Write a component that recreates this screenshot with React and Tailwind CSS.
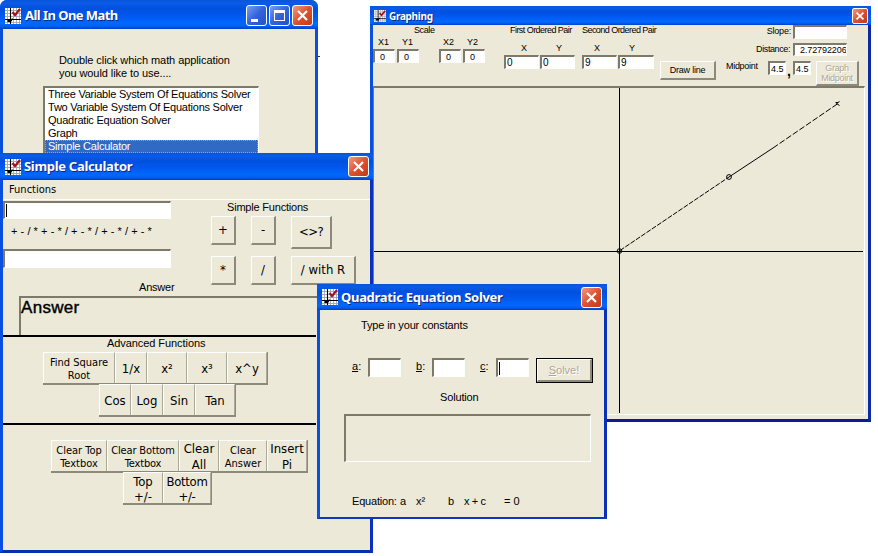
import React from "react";

const SUNKEN =
  "border-t-2 border-l-2 border-b border-r border-t-[#7d7a6c] border-l-[#7d7a6c] border-b-white border-r-white";

function AppIcon({ className }) {
  return (
    <svg viewBox="0 0 16 16" className={className}>
      <rect width="16" height="16" fill="#fff" />
      <path
        d="M2.5 0V16M8.5 0V16M11.5 0V16M14.5 0V16M0 2.5H16M0 5.5H16M0 8.5H16M0 14.5H16"
        stroke="#a3a3ae"
        strokeWidth="0.9"
      />
      <path d="M5.5 0V16M0 11.5H16" stroke="#000" strokeWidth="1.1" />
      <path d="M2 13l2-2 2 1 1-2 1 1-2 3H3z" fill="#000" />
      <path d="M7.5 4L10 7L15 1" fill="none" stroke="#a8101c" strokeWidth="2.2" />
    </svg>
  );
}

function CloseButton({ small }) {
  return (
    <span
      className={
        "flex shrink-0 items-center justify-center border border-white bg-gradient-to-br from-[#ee9a80] via-[#dc5130] to-[#c03a18] " +
        (small ? "h-4 w-4 rounded-[2px]" : "h-[21px] w-[21px] rounded-[3px]")
      }
    >
      <svg viewBox="0 0 13 13" className={small ? "h-[10px] w-[10px]" : "h-[13px] w-[13px]"}>
        <path d="M2 2L11 11M11 2L2 11" stroke="#fff" strokeWidth="2.2" />
      </svg>
    </span>
  );
}

function BlueButton({ children }) {
  return (
    <span className="flex h-[21px] w-[21px] shrink-0 rounded-[3px] border border-white bg-gradient-to-br from-[#7c9df0] via-[#3263dc] to-[#2450cc]">
      {children}
    </span>
  );
}

const TITLE =
  "flex shrink-0 items-center bg-[linear-gradient(180deg,#0a55d8_0%,#0b5be8_12%,#0050e0_30%,#0058ee_55%,#0068ff_80%,#0060f4_90%,#0040c0_100%)]";
const TITLE_TEXT =
  "whitespace-nowrap font-['Noto_Sans','Open_Sans',sans-serif] font-bold text-white [text-shadow:1px_1px_0_#0a2a80]";

function Raised({ className, children }) {
  return (
    <span
      className={
        "flex shrink-0 items-center justify-center whitespace-nowrap border-t border-l border-b-2 border-r-2 border-t-white border-l-white border-b-[#8d8a7b] border-r-[#8d8a7b] bg-[#ece9d8] text-center " +
        className
      }
    >
      {children}
    </span>
  );
}

function Segment({ className, children }) {
  return (
    <span
      className={
        "flex h-full shrink-0 items-center justify-center whitespace-nowrap border-t border-l border-r border-t-white border-l-white border-r-[#aca899] pt-px text-center font-['DejaVu_Sans_Condensed','DejaVu_Sans',sans-serif] [font-stretch:condensed] " +
        className
      }
    >
      {children}
    </span>
  );
}

function Strip({ className, children }) {
  return (
    <div className={"flex h-[33px] w-fit border-r border-b-2 border-[#8d8a7b] " + className}>{children}</div>
  );
}

function Field({ className, children }) {
  return (
    <span className={"flex shrink-0 items-center overflow-hidden whitespace-nowrap bg-white " + SUNKEN + " " + className}>
      {children}
    </span>
  );
}

function MainWindow() {
  return (
    <section className="absolute top-0 left-0 flex h-[170px] w-[318px] flex-col overflow-hidden rounded-t-[7px] bg-[#0a4fd8]">
      <header className={TITLE + " h-[29px] pt-[2px] pr-[5px] pl-[5px]"}>
        <AppIcon className="h-4 w-4" />
        <span className={TITLE_TEXT + " ml-[4px] flex-1 text-[13px] tracking-[-0.55px]"}>All In One Math</span>
        <div className="flex gap-[2px]">
          <BlueButton>
            <i className="mt-[13px] ml-[4px] h-[3px] w-[7px] bg-white" />
          </BlueButton>
          <BlueButton>
            <i className="m-[4px] h-[11px] w-[11px] border border-t-[3px] border-white" />
          </BlueButton>
          <CloseButton />
        </div>
      </header>
      <div className="mx-[3px] flex-1 bg-[#ece9d8] pt-[25px]">
        <p className="ml-[56px] text-[11px] leading-[13px] tracking-[-0.08px] whitespace-nowrap">
          Double click which math application
          <br />
          you would like to use....
        </p>
        <ul className="mt-[6px] ml-[40px] h-[80px] w-[216px] border-t-2 border-l-2 border-r border-t-[#7d7a6c] border-l-[#7d7a6c] border-r-white bg-white text-[11px] leading-[13px] tracking-[-0.23px] whitespace-nowrap">
          <li className="pl-[3px]">Three Variable System Of Equations Solver</li>
          <li className="pl-[3px]">Two Variable System Of Equations Solver</li>
          <li className="pl-[3px]">Quadratic Equation Solver</li>
          <li className="pl-[3px]">Graph</li>
          <li className="bg-[#316ac5] pl-[3px] text-white outline-1 -outline-offset-1 outline-dotted outline-[#c99b4a]">
            Simple Calculator
          </li>
        </ul>
      </div>
    </section>
  );
}

function GraphWindow() {
  return (
    <section className="absolute top-[6px] left-[370px] flex h-[416px] w-[501px] flex-col border-r-[3px] border-b-[3px] border-l-[3px] border-r-[#0a2aa8] border-b-[#0a1c90] border-l-[#0a50e0] bg-[#ece9d8] text-[9px] leading-[10px] whitespace-nowrap">
      <header className={TITLE + " -mr-[3px] -ml-[3px] h-[19px] pr-[3px] pl-[4px]"}>
        <AppIcon className="h-[12px] w-[12px]" />
        <span className={TITLE_TEXT + " ml-[3px] flex-1 text-[10px] tracking-[-0.3px]"}>Graphing</span>
        <CloseButton small />
      </header>
      <div className="flex h-[61px] shrink-0">
        <div className="w-[131px]">
          <p className="pl-[41px] leading-[11px] tracking-[-0.4px]">Scale</p>
          <div className="mt-[1px] flex">
            <span className="w-[24px] pl-[5px]">X1</span>
            <span className="w-[41px] pl-[5px]">Y1</span>
            <span className="w-[25px] pl-[5px]">X2</span>
            <span className="pl-[4px]">Y2</span>
          </div>
          <div className="mt-[2px] flex">
            <Field className="h-[14px] w-[22px] pl-[5px]">0</Field>
            <Field className="ml-[2px] h-[14px] w-[22px] pl-[5px]">0</Field>
            <Field className="ml-[20px] h-[14px] w-[22px] pl-[5px]">0</Field>
            <Field className="ml-[2px] h-[14px] w-[22px] pl-[5px]">0</Field>
          </div>
        </div>
        <div className="w-[78px]">
          <p className="pl-[6px] leading-[11px] tracking-[-0.55px]">First Ordered Pair</p>
          <div className="mt-[7px] flex">
            <span className="w-[35px] pl-[17px]">X</span>
            <span className="pl-[17px]">Y</span>
          </div>
          <div className="mt-[2px] flex gap-[1px]">
            <Field className="h-[14px] w-[35px] pl-[1px] text-[10px]">0</Field>
            <Field className="h-[14px] w-[35px] pl-[1px] text-[10px]">0</Field>
          </div>
        </div>
        <div className="w-[78px]">
          <p className="leading-[11px] tracking-[-0.55px]">Second Ordered Pair</p>
          <div className="mt-[7px] flex">
            <span className="w-[35px] pl-[12px]">X</span>
            <span className="pl-[12px]">Y</span>
          </div>
          <div className="mt-[2px] flex gap-[1px]">
            <Field className="h-[14px] w-[35px] pl-[1px] text-[10px]">9</Field>
            <Field className="h-[14px] w-[36px] pl-[1px] text-[10px]">9</Field>
          </div>
        </div>
        <Raised className="mt-[36px] h-[19px] w-[56px] tracking-[-0.2px]">Draw line</Raised>
        <div className="ml-[2px] flex-1">
          <div className="flex justify-end pr-[21px]">
            <span className="mt-[1px] mr-[2px] tracking-[-0.2px]">Slope:</span>
            <Field className="h-[14px] w-[54px]" />
          </div>
          <div className="mt-[4px] flex justify-end pr-[21px]">
            <span className="mt-[1px] mr-[3px] tracking-[-0.4px]">Distance:</span>
            <Field className="h-[13px] w-[54px] pl-[5px] tracking-[-0.1px]">2.72792206</Field>
          </div>
          <div className="mt-[5px] flex pl-[8px]">
            <span className="w-[42px] tracking-[-0.3px]">Midpoint</span>
            <Field className="h-[14px] w-[18px] pl-px">4.5</Field>
            <span className="w-[7px] pt-[5px] pl-[1px] text-[14px] font-bold">,</span>
            <Field className="h-[14px] w-[18px] pl-px">4.5</Field>
            <Raised className="ml-[5px] h-[25px] w-[43px] tracking-[-0.3px] text-[#aca899] [text-shadow:1px_1px_0_#fff]">
              <span>
                Graph
                <br />
                Midpoint
              </span>
            </Raised>
          </div>
        </div>
      </div>
      <div className="h-[329px] w-[492px] border-t-2 border-r border-b border-l border-t-[#7d7a6c] border-r-white border-b-white border-l-[#7d7a6c]">
        <svg viewBox="374 88 490 326" className="h-[326px] w-[490px]">
          <g stroke="#000" fill="none" strokeWidth="1">
            <path d="M619.5 86V413M373 251.5H863" shapeRendering="crispEdges" />
            <path d="M620 250.5L729 177" strokeDasharray="5 1.4" />
            <path d="M729 177L773 148" />
            <path d="M773 148L838 103.5" strokeDasharray="6 2" />
            <circle cx="619.5" cy="251" r="2.3" />
            <circle cx="729" cy="177" r="2.4" />
            <path d="M839.5 101.5L836.5 103.5L839.5 105.5M835.5 102.5H838" />
          </g>
        </svg>
      </div>
    </section>
  );
}

const BTN_TEXT = "font-['DejaVu_Sans_Condensed','DejaVu_Sans',sans-serif] [font-stretch:condensed]";

function CalculatorWindow() {
  return (
    <section className="absolute top-[153px] left-0 flex h-[400px] w-[373px] flex-col border-r-[3px] border-b-[3px] border-l-[3px] border-r-[#0a30c0] border-b-[#0a30b0] border-l-[#0a50e0] bg-[#ece9d8]">
      <header className={TITLE + " -mr-[3px] -ml-[3px] h-[27px] pr-[4px] pl-[5px]"}>
        <AppIcon className="h-4 w-4" />
        <span className={TITLE_TEXT + " ml-[3px] flex-1 pt-px text-[13px] tracking-[-0.3px]"}>Simple Calculator</span>
        <CloseButton />
      </header>
      <nav className="h-[20px] shrink-0 border-b border-white pl-[6px] text-[11px] leading-[18px]">
        <span className={BTN_TEXT}>Functions</span>
      </nav>
      <div className="flex h-[97px] shrink-0">
        <div className="w-[208px] pt-[1px]">
          <Field className="h-[18px] w-[168px] pl-px">
            <i className="h-[13px] w-px bg-black" />
          </Field>
          <p className="h-[30px] pt-[5px] pl-[8px] text-[11px] leading-[14px] tracking-[0.05px] whitespace-pre">
            + - / * + - * / + - * / + - * / + - *
          </p>
          <Field className="h-[19px] w-[168px]" />
          <p className="pt-[12px] pl-[136px] text-[11px] leading-[14px] tracking-[-0.2px]">Answer</p>
        </div>
        <div>
          <p className="pl-[16px] text-[11px] leading-[15px] tracking-[-0.2px]">Simple Functions</p>
          <div className={"mt-[1px] flex text-[13px] " + BTN_TEXT}>
            <Raised className="h-[29px] w-[25px]">+</Raised>
            <Raised className="ml-[15px] h-[29px] w-[25px]">-</Raised>
            <Raised className="ml-[15px] h-[33px] w-[41px] tracking-[-0.6px]">&lt;&gt;?</Raised>
          </div>
          <div className={"mt-[7px] flex text-[13px] " + BTN_TEXT}>
            <Raised className="h-[29px] w-[25px]">*</Raised>
            <Raised className="ml-[15px] h-[29px] w-[25px]">/</Raised>
            <Raised className="ml-[15px] h-[29px] w-[65px]">/ with R</Raised>
          </div>
        </div>
      </div>
      <div className="mt-[-1px] ml-[16px] h-[39px] w-[350px] shrink-0 border-t-2 border-l-2 border-[#7d7a6c] text-[17px] leading-[20px] tracking-[0.3px] [-webkit-text-stroke:0.4px_#000]">
        Answer
      </div>
      <hr className="h-[2px] w-[313px] shrink-0 border-0 bg-black" />
      <p className="-mt-px mb-[2px] pl-[104px] text-[11px] leading-[14px] tracking-[-0.07px]">Advanced Functions</p>
      <Strip className="ml-[40px] shrink-0 text-[13px]">
        <Segment className="w-[72px] text-[11px] leading-[13px]">
          Find Square
          <br />
          Root
        </Segment>
        <Segment className="w-[32px]">1/x</Segment>
        <Segment className="w-[40px]">x²</Segment>
        <Segment className="w-[40px]">x³</Segment>
        <Segment className="w-[40px]">x^y</Segment>
      </Strip>
      <Strip className="-mt-px ml-[96px] shrink-0 text-[13px]">
        <Segment className="w-[32px]">Cos</Segment>
        <Segment className="w-[32px]">Log</Segment>
        <Segment className="w-[32px]">Sin</Segment>
        <Segment className="w-[40px]">Tan</Segment>
      </Strip>
      <hr className="mt-[6px] h-[2px] w-[313px] shrink-0 border-0 bg-black" />
      <Strip className="mt-[15px] ml-[48px] shrink-0 text-[11px] leading-[13px]">
        <Segment className="w-[56px]">
          Clear Top
          <br />
          Textbox
        </Segment>
        <Segment className="w-[72px] tracking-[-0.15px]">
          Clear Bottom
          <br />
          Textbox
        </Segment>
        <Segment className="w-[40px] text-[13px] leading-[16px]">
          Clear
          <br />
          All
        </Segment>
        <Segment className="w-[48px]">
          Clear
          <br />
          Answer
        </Segment>
        <Segment className="w-[40px] text-[13px] leading-[16px]">
          Insert
          <br />
          Pi
        </Segment>
      </Strip>
      <Strip className="-mt-px ml-[120px] shrink-0 text-[13px] leading-[15px]">
        <Segment className="w-[40px]">
          Top
          <br />
          +/-
        </Segment>
        <Segment className="w-[48px] tracking-[-0.3px]">
          Bottom
          <br />
          +/-
        </Segment>
      </Strip>
    </section>
  );
}

function QuadraticWindow() {
  return (
    <section className="absolute top-[284px] left-[317px] flex h-[235px] w-[290px] flex-col border-r-[3px] border-b-[2px] border-l-[3px] border-r-[#0a30b8] border-b-[#0a38c0] border-l-[#0a50e0] bg-[#ece9d8] text-[11px] leading-[14px] whitespace-nowrap">
      <header className={TITLE + " -mr-[3px] -ml-[3px] h-[26px] pr-[5px] pl-[5px]"}>
        <AppIcon className="h-4 w-4" />
        <span className={TITLE_TEXT + " ml-[3px] flex-1 text-[13px] tracking-[-0.3px]"}>Quadratic Equation Solver</span>
        <CloseButton />
      </header>
      <p className="mt-[8px] pl-[41px] tracking-[-0.15px]">Type in your constants</p>
      <div className="mt-[26px] flex h-[26px] pl-[32px]">
        <span className="w-[16px] pt-px"><u>a</u>:</span>
        <Field className="h-[19px] w-[33px]" />
        <span className="ml-[15px] w-[16px] pt-px"><u>b</u>:</span>
        <Field className="h-[19px] w-[33px]" />
        <span className="ml-[15px] w-[16px] pt-px"><u>c</u>:</span>
        <Field className="h-[19px] w-[33px] pl-px">
          <i className="h-[13px] w-px bg-black" />
        </Field>
        <span className="ml-[7px] flex h-[25px] w-[57px] border border-black">
          <Raised className="flex-1 text-[#aca899] [text-shadow:1px_1px_0_#fff]">
            <span><u>S</u>olve!</span>
          </Raised>
        </span>
      </div>
      <p className="mt-[6px] pl-[120px] tracking-[-0.15px]">Solution</p>
      <div className={"mt-[10px] ml-[24px] h-[48px] w-[247px] shrink-0 " + SUNKEN} />
      <div className="mt-[32px] flex pl-[32px]">
        <span className="w-[48px] tracking-[-0.2px]">Equation:</span>
        <span className="w-[16px]">a</span>
        <span className="w-[32px]">x²</span>
        <span className="w-[16px]">b</span>
        <span className="w-[40px] tracking-[-0.4px]">x + c</span>
        <span>= 0</span>
      </div>
    </section>
  );
}

export default function App() {
  return (
    <main className="relative h-[556px] w-[878px] overflow-hidden bg-white font-['Liberation_Sans',Arial,sans-serif] text-black">
      <MainWindow />
      <i className="absolute top-[56px] left-[318px] h-px w-[2px] bg-[#333]" />
      <GraphWindow />
      <CalculatorWindow />
      <QuadraticWindow />
    </main>
  );
}
